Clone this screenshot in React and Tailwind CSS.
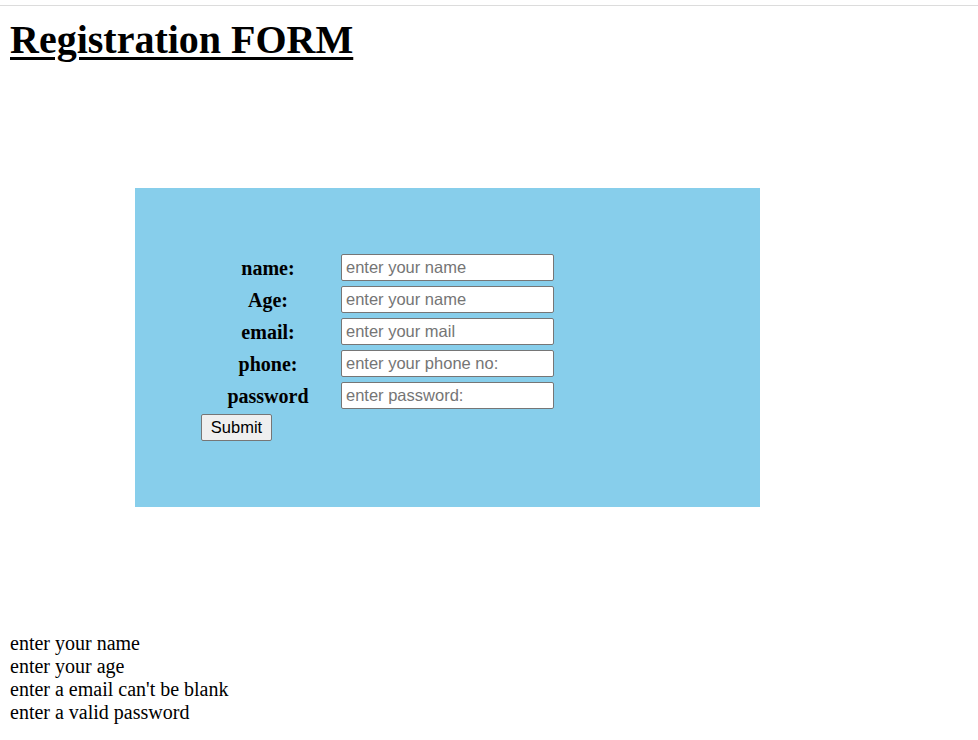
import React from 'react';

const fields = [
  { label: 'name:', placeholder: 'enter your name', type: 'text' },
  { label: 'Age:', placeholder: 'enter your name', type: 'text' },
  { label: 'email:', placeholder: 'enter your mail', type: 'email' },
  { label: 'phone:', placeholder: 'enter your phone no:', type: 'text' },
  { label: 'password', placeholder: 'enter password:', type: 'password' },
];

const messages = [
  'enter your name',
  'enter your age',
  "enter a email can't be blank",
  'enter a valid password',
];

const App = () => {
  return (
    <div className="min-h-[740px] bg-white text-black font-['Liberation_Serif',serif]">
      {/* top rule */}
      <div className="pt-[5px]">
        <div className="h-px bg-[#dcdcdc]" />
      </div>

      <div className="px-[10px]">
        <h1 className="mt-[11px] text-[40px] leading-[46px] font-bold underline decoration-[3px] underline-offset-[4px]">
          Registration FORM
        </h1>

        {/* Form box */}
        <div className="mt-[125px] ml-[125px] w-[625px] h-[319px] bg-[#87ceeb] pt-[66px] pl-[66px]">
          <form className="grid grid-cols-[134px_213px] gap-x-[6px] gap-y-[5px]">
            {fields.map((f) => (
              <React.Fragment key={f.label}>
                <label className="h-[27px] flex items-center justify-center text-[20px] font-bold">
                  {f.label}
                </label>
                <input
                  type={f.type}
                  placeholder={f.placeholder}
                  className="h-[27px] w-[213px] bg-white border border-[#767676] rounded-[2px] pl-[4px] text-[16.5px] font-['Liberation_Sans',Arial,sans-serif] placeholder:text-[#757575] outline-none"
                />
              </React.Fragment>
            ))}
            <div className="col-span-2">
              <button
                type="button"
                className="h-[27px] w-[71px] bg-[#efefef] border border-[#767676] rounded-[2px] text-[16.5px] font-['Liberation_Sans',Arial,sans-serif] text-black"
              >
                Submit
              </button>
            </div>
          </form>
        </div>

        {/* Validation messages */}
        <div className="mt-[125px] text-[20px] leading-[23px]">
          {messages.map((m) => (
            <div key={m}>{m}</div>
          ))}
        </div>
      </div>
    </div>
  );
};

export default App;
